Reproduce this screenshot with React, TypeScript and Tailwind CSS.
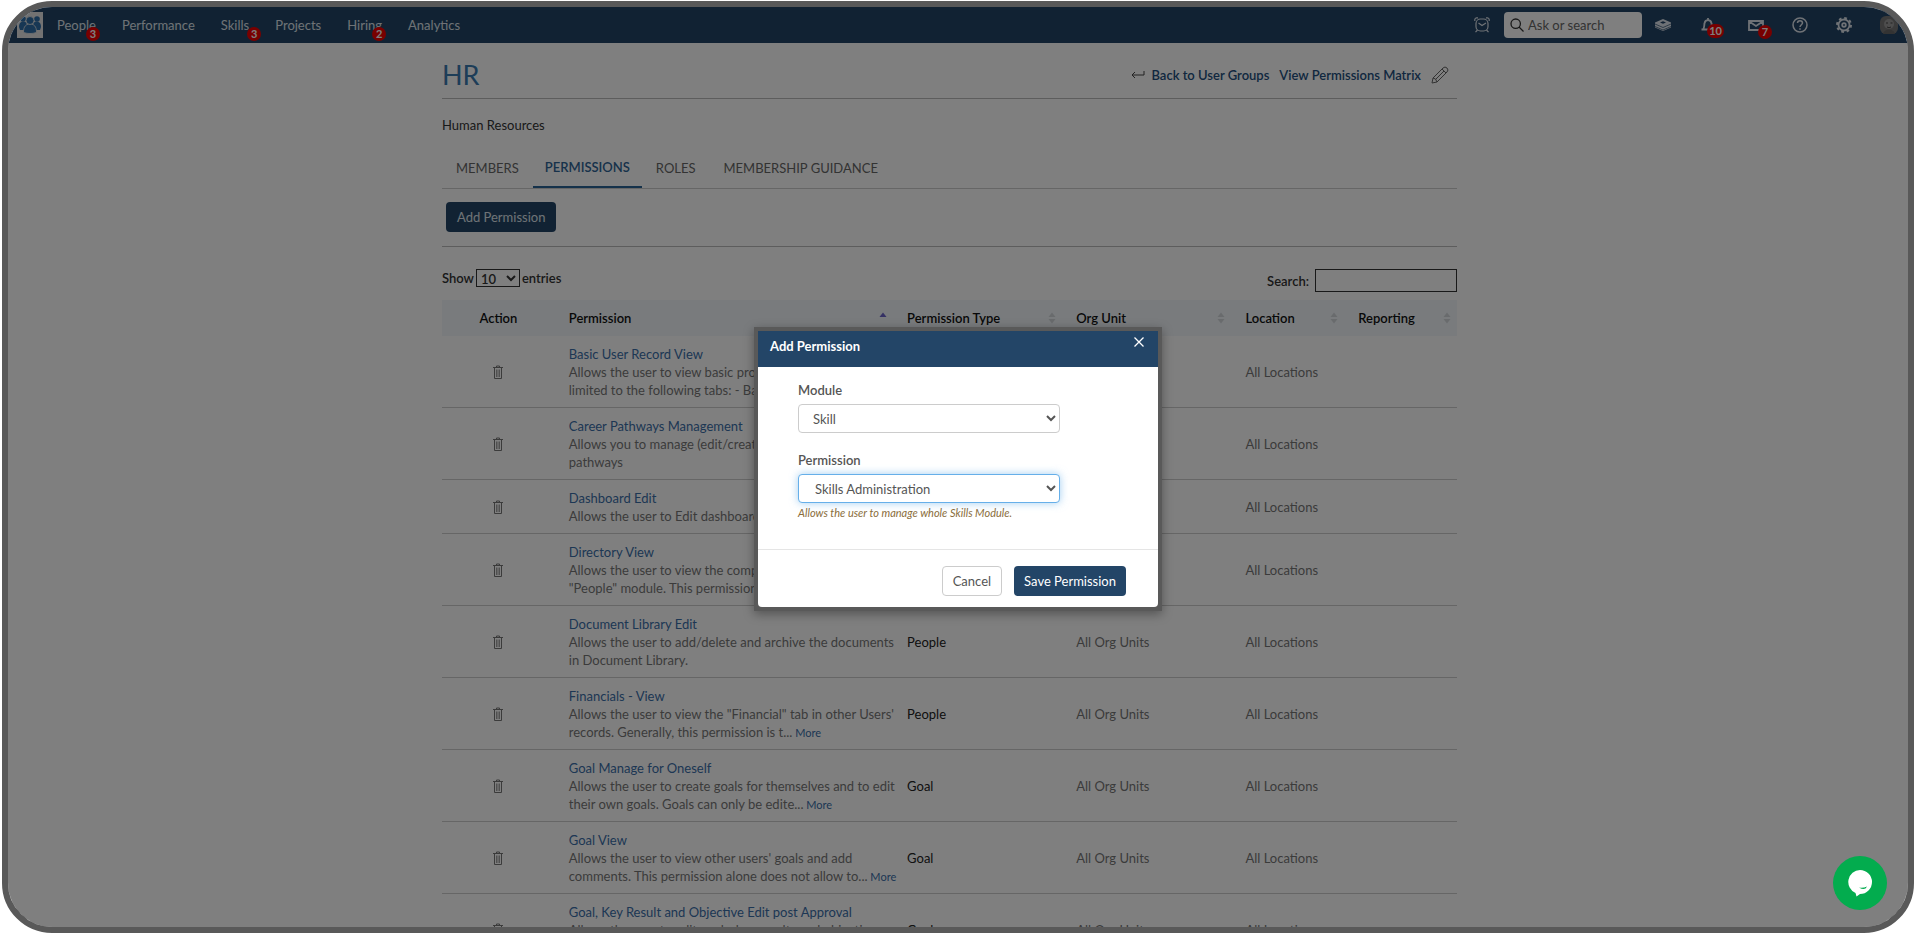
import React, { useState } from 'react';

type Row = {
    name: string;
    description: string;
    more?: boolean;
    type: string;
};

const ROWS: Row[] = [
    { name: 'Basic User Record View', description: 'Allows the user to view basic profile information\nlimited to the following tabs: - Basic...', more: true, type: 'People' },
    { name: 'Career Pathways Management', description: 'Allows you to manage (edit/create/delete) career\npathways', type: 'Skill' },
    { name: 'Dashboard Edit', description: 'Allows the user to Edit dashboards', type: 'Core' },
    { name: 'Directory View', description: 'Allows the user to view the company directory in\n"People" module. This permission a...', more: true, type: 'People' },
    { name: 'Document Library Edit', description: 'Allows the user to add/delete and archive the documents\nin Document Library.', type: 'People' },
    { name: 'Financials - View', description: 'Allows the user to view the "Financial" tab in other Users\'\nrecords. Generally, this permission is t...', more: true, type: 'People' },
    { name: 'Goal Manage for Oneself', description: 'Allows the user to create goals for themselves and to edit\ntheir own goals. Goals can only be edite...', more: true, type: 'Goal' },
    { name: 'Goal View', description: 'Allows the user to view other users\' goals and add\ncomments. This permission alone does not allow to...', more: true, type: 'Goal' },
    { name: 'Goal, Key Result and Objective Edit post Approval', description: 'Allows the user to edit goals, key results and objectives\nafter they are approved.', type: 'Goal' },
];

const NAV = [
    { label: 'People', badge: 3 },
    { label: 'Performance' },
    { label: 'Skills', badge: 3, wide: true },
    { label: 'Projects' },
    { label: 'Hiring', badge: 2 },
    { label: 'Analytics' },
];

const TABS = ['MEMBERS', 'PERMISSIONS', 'ROLES', 'MEMBERSHIP GUIDANCE'];

const Badge: React.FC<{ className: string; children: React.ReactNode }> = ({ className, children }) => (
    <span className={`absolute flex h-3.5 min-w-3.5 items-center justify-center rounded-full bg-[#f00000] px-0.5 text-[11px] font-bold text-white ${className}`}>
        {children}
    </span>
);

const TrashIcon = () => (
    <svg viewBox="0 0 12 14" fill="none" stroke="currentColor" className="h-3.5 w-3">
        <path d="M1 2.500h10M4.500 2.500v-1.500h3v1.500" />
        <path d="M2.500 3v10.500h7V3" />
        <path d="M4.500 4.500v7.500M6 4.500v7.500M7.500 4.500v7.500" strokeWidth="0.700" />
    </svg>
);

const SortIcon: React.FC<{ active?: boolean }> = ({ active }) => (
    <svg viewBox="0 0 8 12" className="h-3 w-2 shrink-0">
        <path d="M0.500 5L4 0.500L7.500 5z" fill={active ? '#6a62c8' : '#d3d7db'} />
        {!active && <path d="M0.500 7L4 11.500L7.500 7z" fill="#d3d7db" />}
    </svg>
);

const LogoIcon = () => (
    <svg viewBox="0 0 26 26" className="size-[26px] bg-[#e4e4e4]">
        <g fill="#2f6fa8">
            <circle cx="6" cy="7" r="2.800" />
            <circle cx="20" cy="7" r="2.800" />
            <path d="M2 15c0-4 2-5.500 4.500-5.500S10 11 10 14l-2 4H3z" />
            <path d="M24 15c0-4-2-5.500-4.500-5.500S16 11 16 14l2 4h5z" />
        </g>
        <g fill="#2f6fa8" stroke="#e4e4e4" strokeWidth="0.800">
            <path d="M6.500 20c0-5.500 2.500-8 6.500-8s6.500 2.500 6.500 8c-2 2-11 2-13 0z" />
            <circle cx="13" cy="8.500" r="4" />
        </g>
    </svg>
);

const Header = () => (
    <header className="flex h-9 items-center bg-[#234567] pr-2.5 pl-[9px] text-[#dfe5ec]">
        <a href="#home" aria-label="Home"><LogoIcon /></a>
        <nav className="ml-3.5 flex gap-[26px]">
            {NAV.map(item => (
                <a key={item.label} href="#nav" className={item.wide ? 'relative -mr-2 pr-2' : 'relative'}>
                    {item.label}
                    {item.badge && <Badge className="-right-1 -bottom-[7px]">{item.badge}</Badge>}
                </a>
            ))}
        </nav>
        <div className="ml-auto flex items-center">
            <a href="#timer" aria-label="Timer">
                <svg viewBox="0 0 16 16" fill="none" stroke="currentColor" strokeWidth="1.200" className="size-4">
                    <rect x="2" y="2" width="12" height="12" rx="4.500" />
                    <path d="M0.800 4V2.500Q1 1 2.500 0.800H4M12 0.800h1.500Q15 1 15.200 2.500V4M3.500 13L1.500 15.200M12.500 13l2 2.200M4.500 6L8 8.500L12 6" />
                </svg>
            </a>
            <div className="ml-3.5 flex h-[26px] w-[138px] items-center gap-1 rounded bg-white px-1.5 text-[#555]">
                <svg viewBox="0 0 14 14" fill="none" stroke="#333" strokeWidth="1.300" className="size-3.5 shrink-0">
                    <circle cx="5.700" cy="5.700" r="4.700" />
                    <path d="M9 9l4.500 4.500" />
                </svg>
                <input aria-label="Ask or search" placeholder="Ask or search" className="w-full min-w-0 outline-none placeholder:text-[#666]" />
            </div>
            <a href="#learning" aria-label="Learning" className="ml-3">
                <svg viewBox="0 0 18 14" className="h-3.5 w-[18px]">
                    <path d="M9 1L17 4.500v5L9 13L1 9.500v-5z" fill="currentColor" />
                    <path d="M1 6l8 3.500L17 6M1 8.500l8 3.500l8-3.500" fill="none" stroke="#234567" strokeWidth="0.700" />
                    <path d="M6 4.500l3-1.300l3 1.300l-3 1.300z" fill="#234567" />
                </svg>
            </a>
            <a href="#alerts" aria-label="Notifications" className="relative ml-7">
                <svg viewBox="0 0 16 16" fill="none" stroke="currentColor" strokeWidth="1.800" className="size-4">
                    <path d="M1.500 12.500H12M3 12.500C4.500 11 4 9 4.500 6.500C5 2 11 2 11.500 6.500C12 9 11.500 11 13 12.500M8 1v2" />
                </svg>
                <Badge className="-right-2 -bottom-[5px]">10</Badge>
            </a>
            <a href="#mail" aria-label="Messages" className="relative ml-8">
                <svg viewBox="0 0 16 14" fill="none" stroke="currentColor" strokeWidth="1.800" className="h-3.5 w-4">
                    <path d="M1 3h14v9H1zM2 4l6 4l6-4" />
                </svg>
                <Badge className="-right-2 -bottom-[7px]">7</Badge>
            </a>
            <a href="#help" aria-label="Help" className="ml-7">
                <svg viewBox="0 0 16 16" fill="none" stroke="currentColor" strokeWidth="1.500" className="size-4">
                    <circle cx="8" cy="8" r="7" />
                    <path d="M5.500 6c0-3 5-3 5 0c0 1.500-2.500 2-2.500 4M8 11.200v1.500" />
                </svg>
            </a>
            <a href="#settings" aria-label="Settings" className="ml-7">
                <svg viewBox="0 0 16 16" fill="none" stroke="currentColor" className="size-4">
                    <circle cx="8" cy="8" r="5.500" strokeWidth="1.800" />
                    <circle cx="8" cy="8" r="7" strokeWidth="2" strokeDasharray="2.750 2.750" />
                    <circle cx="8" cy="8" r="1.800" strokeWidth="1.800" />
                </svg>
            </a>
            <a href="#me" aria-label="Profile" className="ml-7">
                <svg viewBox="0 0 18 18" className="size-[18px]">
                    <rect width="18" height="18" rx="6" fill="#777" />
                    <circle cx="9" cy="8" r="5" fill="#9a9a9a" />
                    <path d="M6 7h2M10.500 7h2M7 11q2 1.500 4 0" stroke="#444" fill="none" />
                    <path d="M3 18c1-6 11-6 12 0z" fill="#666" />
                </svg>
            </a>
        </div>
    </header>
);

const PermissionTable = () => (
    <table className="w-full table-fixed text-left">
        <colgroup>
            <col className="w-1/9" />
            <col className="w-3/9" />
            <col className="w-1/6" />
            <col className="w-1/6" />
            <col className="w-1/9" />
            <col className="w-1/9" />
        </colgroup>
        <thead className="bg-[#f2f7fb] text-[#111]">
            <tr>
                <th className="h-9 text-center font-semibold">Action</th>
                {['Permission', 'Permission Type', 'Org Unit', 'Location', 'Reporting'].map((title, i) => (
                    <th key={title} className="pr-1.5 pl-3.5 font-semibold">
                        <div className="flex items-center justify-between">
                            {title}
                            <SortIcon active={i === 0} />
                        </div>
                    </th>
                ))}
            </tr>
        </thead>
        <tbody className="text-[#777]">
            {ROWS.map(row => (
                <tr key={row.name} className="border-b border-[#ccc]">
                    <td>
                        <button aria-label={`Delete ${row.name}`} className="mx-auto block"><TrashIcon /></button>
                    </td>
                    <td className="pt-[9px] pb-2 pl-3.5 whitespace-pre">
                        <a href="#permission" className="block text-[#3a6ea8]">{row.name}</a>
                        {row.description}
                        {row.more && <a href="#more" className="text-[11px] leading-none text-[#3a6ea8]"> More</a>}
                    </td>
                    <td className="px-3.5 text-[#222]">{row.type}</td>
                    <td className="px-3.5">All Org Units</td>
                    <td className="px-3.5">All Locations</td>
                    <td />
                </tr>
            ))}
        </tbody>
    </table>
);

const AddPermissionModal: React.FC<{ onClose: () => void }> = ({ onClose }) => (
    <div className="absolute inset-0 flex items-start justify-center bg-black/50 pt-[320px]">
        <div role="dialog" aria-label="Add Permission" className="w-[408px] border-4 border-[#595959] bg-[#595959] shadow-[0_3px_10px_rgba(0,0,0,0.35)]">
            <div className="flex h-9 items-start justify-between bg-[#234567] pt-1.5 pr-3.5 pl-3 text-white">
                <h2 className="font-bold">Add Permission</h2>
                <button onClick={onClose} aria-label="Close">
                    <svg viewBox="0 0 10 10" stroke="currentColor" strokeWidth="1.300" className="size-2.5">
                        <path d="M0.500 0.500l9 9M9.500 0.500l-9 9" />
                    </svg>
                </button>
            </div>
            <div className="rounded-b bg-white text-[#555]">
                <div className="flex flex-col px-10 pt-3.5 pb-[27px]">
                    <label htmlFor="module" className="font-semibold">Module</label>
                    <select id="module" className="mt-[5px] h-[29px] w-[262px] rounded border border-[#ccc] bg-white px-2.5">
                        <option>Skill</option>
                    </select>
                    <label htmlFor="permission" className="mt-[18px] font-semibold">Permission</label>
                    <select id="permission" className="mt-[5px] h-[29px] w-[262px] rounded border border-[#66afe9] bg-white px-3 shadow-[0_0_8px_rgba(102,175,233,0.6)]">
                        <option>Skills Administration</option>
                    </select>
                    <p className="mt-px text-[11px] text-[#8a6d3b] italic">Allows the user to manage whole Skills Module.</p>
                </div>
                <div className="flex justify-end gap-3 border-t border-[#e5e5e5] pt-4 pr-8 pb-[11px]">
                    <button onClick={onClose} className="h-[30px] rounded border border-[#ccc] px-2.5">Cancel</button>
                    <button className="h-[30px] rounded bg-[#234567] px-2.5 text-white">Save Permission</button>
                </div>
            </div>
        </div>
    </div>
);

const App: React.FC = () => {
    const [modalOpen, setModalOpen] = useState(true);

    return (
        <div className="h-screen bg-white pt-px pr-1 pb-0.5 pl-0.5 font-[Lato,sans-serif] text-[13px] leading-[18px]">
            <div className="relative h-full overflow-hidden rounded-[50px] border-6 border-[#595959] bg-white">
                <Header />
                <main className="pr-[17px]">
                    <div className="mx-auto max-w-[1015px] text-[#333]">
                        <div className="flex h-14 items-center justify-between border-b border-[#bbb] pr-2">
                            <h1 className="pt-2 text-[27px] text-[#3a7ab0]">HR</h1>
                            <div className="flex items-center gap-2.5 pt-2 font-semibold text-[#234f80]">
                                <a href="#groups" className="flex items-center gap-1.5">
                                    <svg viewBox="0 0 14 10" fill="none" stroke="#444" className="h-2.5 w-3.5">
                                        <path d="M13 1v4H1M4 2L1 5l3 3" />
                                    </svg>
                                    Back to User Groups
                                </a>
                                <a href="#matrix">View Permissions Matrix</a>
                                <button aria-label="Edit group">
                                    <svg viewBox="0 0 18 18" fill="none" stroke="#666" className="size-[18px]">
                                        <path d="M1 17l1-5L12 2q2-2 4 0t0 4L6 16zM11 3l4 4M5 13L13 5M2 12q3 0 4 4" />
                                    </svg>
                                </button>
                            </div>
                        </div>
                        <p className="mt-[17px]">Human Resources</p>
                        <div className="mt-4 flex border-b border-[#ccc] text-[#666]">
                            {TABS.map(tab => (
                                <button
                                    key={tab}
                                    className={tab === 'PERMISSIONS'
                                        ? 'border-b-2 border-[#2a6496] px-3 pt-2 pb-2.5 font-semibold text-[#2f6496]'
                                        : 'px-3.5 pt-2 pb-2.5'}
                                >
                                    {tab}
                                </button>
                            ))}
                        </div>
                        <div className="border-b border-[#bbb] px-1 pt-[13px] pb-3.5">
                            <button onClick={() => setModalOpen(true)} className="h-[30px] rounded bg-[#234567] px-[11px] text-[#dfe5ec]">
                                Add Permission
                            </button>
                        </div>
                        <div className="flex items-start justify-between pt-[22px] pb-2 font-semibold text-[#333]">
                            <label className="flex items-center gap-0.5">
                                Show
                                <select className="h-[18px] w-11 border border-[#333]">
                                    <option>10</option>
                                </select>
                                entries
                            </label>
                            <label className="flex items-center gap-1.5">
                                Search:
                                <input className="h-[23px] w-[142px] border border-[#333]" />
                            </label>
                        </div>
                        <PermissionTable />
                    </div>
                </main>
                {modalOpen && <AddPermissionModal onClose={() => setModalOpen(false)} />}
                <button aria-label="Open chat" className="absolute right-[21px] bottom-[17px] flex size-[54px] items-center justify-center rounded-full bg-[#03ac4e]">
                    <svg viewBox="0 0 26 28" className="h-7 w-[26px]">
                        <path d="M13 1a12 12 0 0 1 0 24L9.500 27.500L8.500 24A12 12 0 0 1 13 1z" fill="#fff" />
                        <path d="M12 18.500q4 1 8-1q-2 4.500-8 1z" fill="#03ac4e" />
                    </svg>
                </button>
            </div>
        </div>
    );
};

export default App;
